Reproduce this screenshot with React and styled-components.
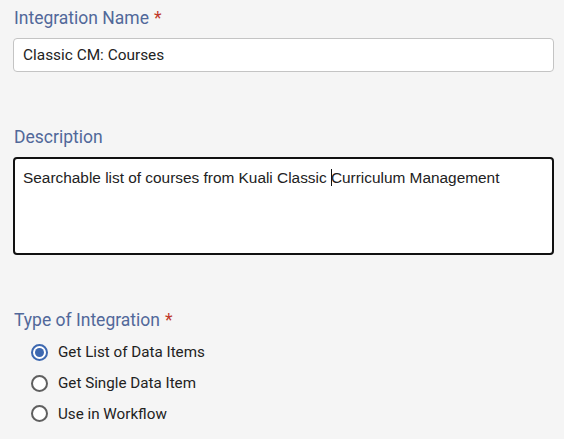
import React from "react";
import styled, { createGlobalStyle } from "styled-components";

const Global = createGlobalStyle`
  html, body { margin: 0; padding: 0; background: #f5f5f5; }
  body { font-family: Roboto, "Noto Sans", sans-serif; }
`;

const Form = styled.div`
  padding: 6px 10px 0 13px;
  display: flex;
  flex-direction: column;
`;

const Field = styled.div`
  display: flex;
  flex-direction: column;
  margin-bottom: ${(p) => p.$mb || 0}px;
`;

const Label = styled.label`
  font-family: Roboto, sans-serif;
  font-size: 17.5px;
  line-height: 24px;
  color: #51689a;
  padding-left: 1px;
  margin-bottom: ${(p) => p.$mb ?? 8}px;
`;

const Req = styled.span`
  color: #c0392b;
  margin-left: 5px;
`;

const Input = styled.div`
  box-sizing: border-box;
  height: 34px;
  background: #fff;
  border: 1px solid #c4c4c4;
  border-radius: 4px;
  padding: 0 9px;
  display: flex;
  align-items: center;
  font-family: Roboto, sans-serif;
  font-size: 15.4px;
  color: #222;
`;

const TextArea = styled.div`
  box-sizing: border-box;
  height: 98px;
  background: #fff;
  border: 2px solid #111;
  border-radius: 4px;
  padding: 10px 8px;
  font-family: "Liberation Sans", Arial, sans-serif;
  font-size: 15.4px;
  line-height: 18px;
  color: #222;
`;

const Caret = styled.span`
  display: inline-block;
  width: 1px;
  height: 17px;
  background: #111;
  vertical-align: -3px;
  margin-right: -1px;
`;

const RadioList = styled.div`
  display: flex;
  flex-direction: column;
  gap: 10px;
  padding-left: 18px;
`;

const RadioRow = styled.div`
  display: flex;
  align-items: center;
  height: 20.7px;
  gap: 10px;
  font-family: Roboto, sans-serif;
  font-size: 15.2px;
  color: #222;
`;

const Circle = styled.span`
  box-sizing: border-box;
  width: 17px;
  height: 17px;
  border-radius: 50%;
  border: 2px solid ${(p) => (p.$on ? "#3d68b0" : "#5f5f5f")};
  display: flex;
  align-items: center;
  justify-content: center;
  background: #fff;
  &::after {
    content: "";
    display: ${(p) => (p.$on ? "block" : "none")};
    width: 9px;
    height: 9px;
    border-radius: 50%;
    background: #3d68b0;
  }
`;

const options = [
  { label: "Get List of Data Items", on: true },
  { label: "Get Single Data Item", on: false },
  { label: "Use in Workflow", on: false },
];

export default function App() {
  return (
    <>
      <Global />
      <Form>
        <Field $mb={53}>
          <Label>
            Integration Name<Req>*</Req>
          </Label>
          <Input>Classic CM: Courses</Input>
        </Field>
        <Field $mb={53}>
          <Label>Description</Label>
          <TextArea>
            Searchable list of courses from Kuali Classic <Caret />Curriculum Management
          </TextArea>
        </Field>
        <Field>
          <Label $mb={10}>
            Type of Integration<Req>*</Req>
          </Label>
          <RadioList>
            {options.map((o) => (
              <RadioRow key={o.label}>
                <Circle $on={o.on} />
                {o.label}
              </RadioRow>
            ))}
          </RadioList>
        </Field>
      </Form>
    </>
  );
}
